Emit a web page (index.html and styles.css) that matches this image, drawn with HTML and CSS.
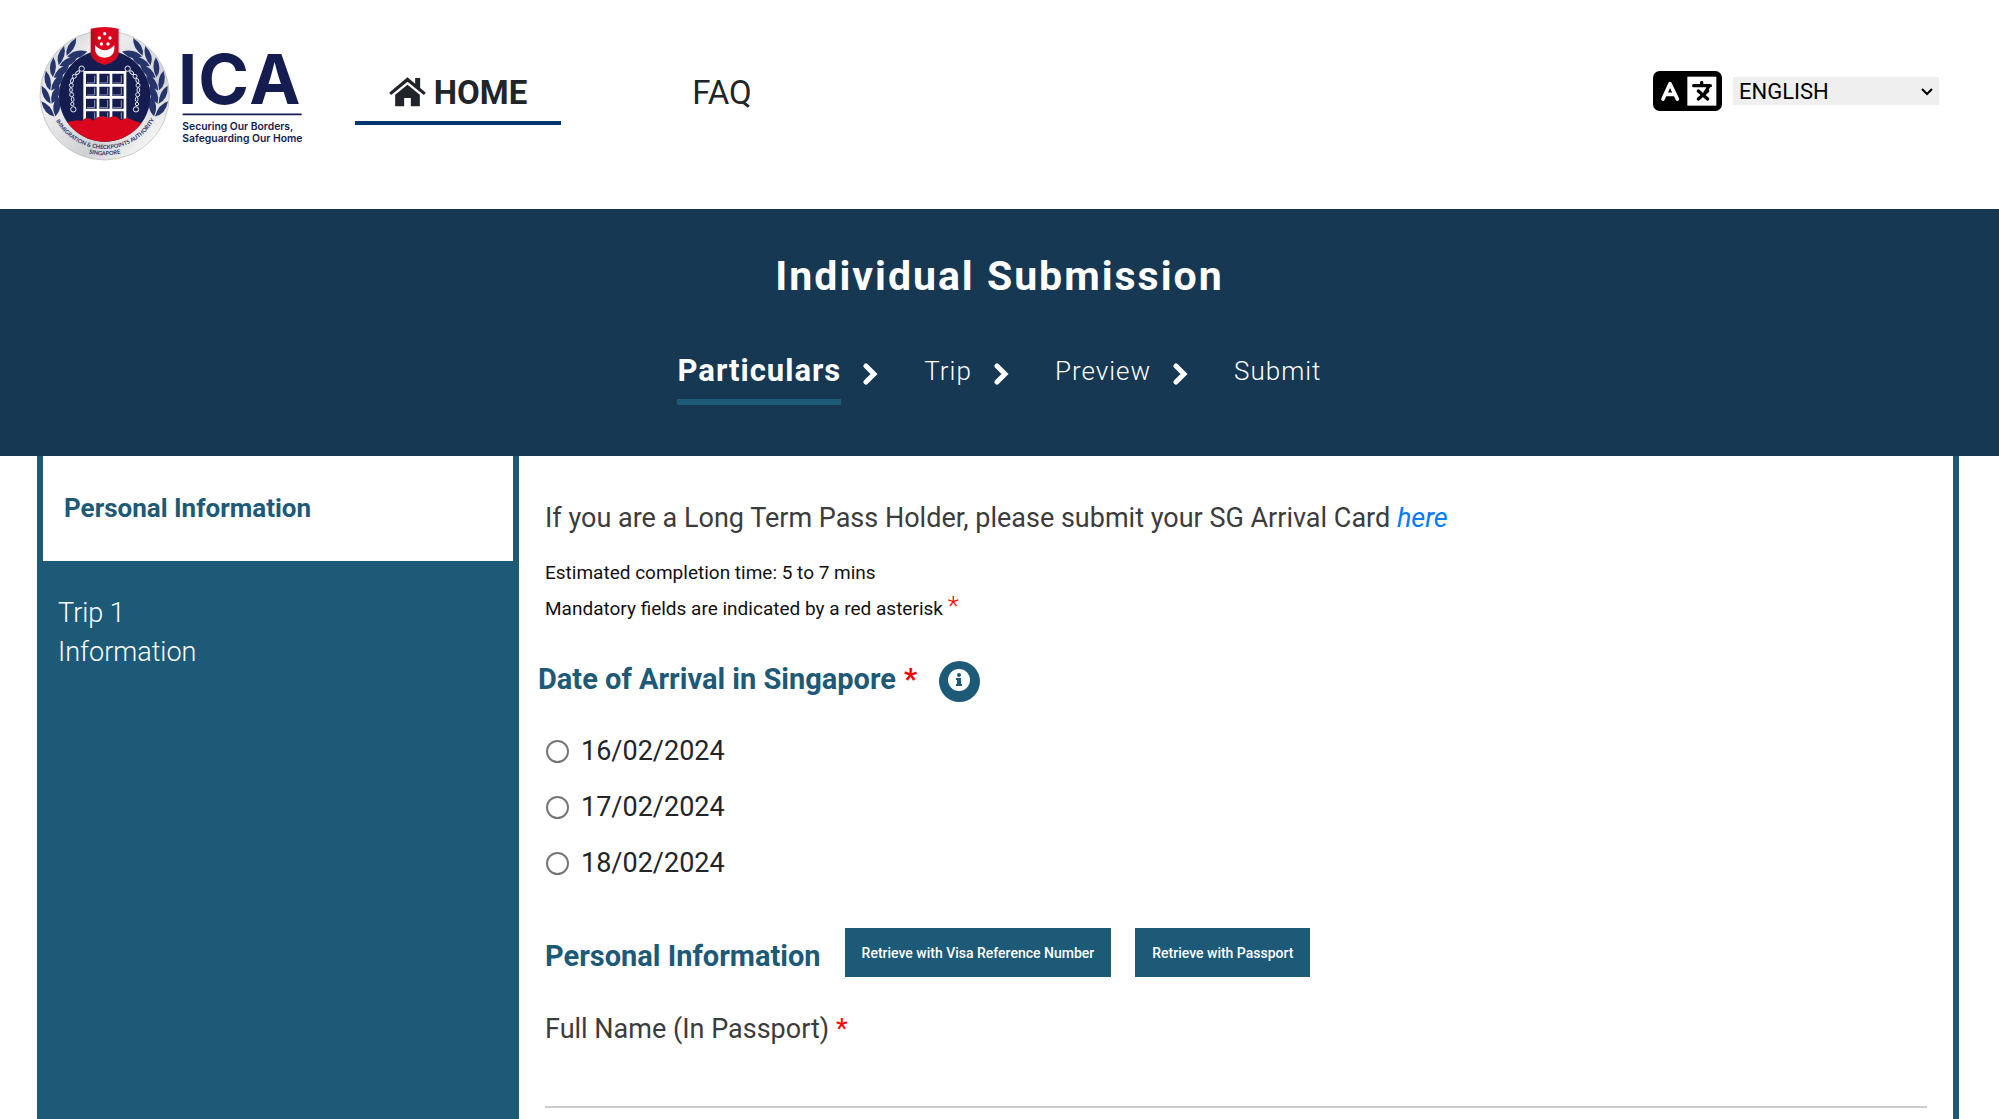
FILE: index.html
```html
<!DOCTYPE html>
<html lang="en">
  <head>
    <meta charset="utf-8">
    <title>SG Arrival Card - Individual Submission</title>
    <link rel="stylesheet" href="styles.css">
  </head>
  <body>
    <header class="header">
      <a href="#home" class="logo" aria-label="ICA">
        <svg width="265" height="140" viewBox="25 30 795 420">
          <defs>
            <linearGradient id="silver" x1="0" y1="0" x2="1" y2="1">
              <stop offset="0" stop-color="#c4c5c7"/>
              <stop offset=".3" stop-color="#f1f1f2"/>
              <stop offset=".65" stop-color="#d0d1d3"/>
              <stop offset=".85" stop-color="#f4f4f4"/>
              <stop offset="1" stop-color="#a4a5a8"/>
            </linearGradient>
            <linearGradient id="red" x1="0" y1="0" x2="1" y2="0">
              <stop offset="0" stop-color="#b8091d"/>
              <stop offset=".4" stop-color="#e3061f"/>
              <stop offset="1" stop-color="#cb0a20"/>
            </linearGradient>
            <clipPath id="disc"><circle cx="225" cy="243" r="137"/></clipPath>
            <g id="leaf">
              <path d="M63 266Q34 252 36 212Q62 228 63 266Z"/>
              <path d="M66 266Q58 232 88 208Q98 246 66 266Z"/>
            </g>
            <g id="laurel" fill="#26356b">
              <use href="#leaf" transform="rotate(-14 225 240)"/>
              <use href="#leaf"/>
              <use href="#leaf" transform="rotate(14 225 240)"/>
              <use href="#leaf" transform="rotate(28 225 240)"/>
              <use href="#leaf" transform="rotate(42 225 240)"/>
              <use href="#leaf" transform="rotate(55 225 240)"/>
            </g>
            <g id="chain" fill="none" stroke="#e8e9ef" stroke-width="3">
              <circle cx="156" cy="161" r="8"/>
              <ellipse cx="144" cy="173" rx="4" ry="7" transform="rotate(50 144 173)"/>
              <circle cx="134" cy="184" r="6"/>
              <ellipse cx="127" cy="197" rx="4" ry="7" transform="rotate(20 127 197)"/>
              <circle cx="125" cy="211" r="6"/>
              <ellipse cx="124" cy="225" rx="4" ry="7"/>
              <circle cx="126" cy="239" r="6"/>
              <ellipse cx="129" cy="253" rx="4" ry="7"/>
              <circle cx="128" cy="267" r="5"/>
              <circle cx="131" cy="283" r="8"/>
            </g>
            <path id="arc1" d="M72 306A170 170 0 0 0 380 302"/>
            <path id="arc2" d="M150 404A174 174 0 0 0 300 404"/>
          </defs>
          <!-- crest -->
          <circle cx="225" cy="241" r="194" fill="url(#silver)" stroke="#b4b5b8" stroke-width="2"/>
          <use href="#laurel"/>
          <use href="#laurel" transform="matrix(-1 0 0 1 450 0)"/>
          <circle cx="225" cy="243" r="137" fill="#151d50"/>
          <use href="#chain"/>
          <use href="#chain" transform="matrix(-1 0 0 1 450 0)"/>
          <!-- portcullis -->
          <path d="M165 318V172H286V318M162 211H286M162 247H286M162 285H286M205 175V318M244 175V318" fill="none" stroke="#fff" stroke-width="8"/>
          <path d="M195 182V204H172M234 182V204H211M275 182V204H250M195 218V240H172M234 218V240H211M275 218V240H250M195 255V278H172M234 255V278H211M275 255V278H250M195 292V312M234 292V312M275 292V312" fill="none" stroke="#8f96b8" stroke-width="3"/>
          <path d="M80 330L118 320L140 316L155 318L168 309L182 311L190 317L205 306L222 303L236 310L248 304L262 305L272 315L292 308L310 316L340 326V400H80Z" fill="#d9061e" clip-path="url(#disc)"/>
          <!-- shield -->
          <path d="M183 41Q225 31 267 41V118Q262 140 225 150Q188 140 183 118Z" fill="url(#red)"/>
          <path d="M196 91Q225 121 254 91Q257 127 225 128Q193 127 196 91Z" fill="#fff"/>
          <g fill="#fff">
            <circle cx="225" cy="56" r="5"/>
            <circle cx="209" cy="69" r="5"/>
            <circle cx="241" cy="69" r="5"/>
            <circle cx="215" cy="87" r="5"/>
            <circle cx="235" cy="87" r="5"/>
          </g>
          <g class="crest-text">
            <text><textPath href="#arc1" startOffset="50%">IMMIGRATION &amp; CHECKPOINTS AUTHORITY</textPath></text>
            <text><textPath href="#arc2" startOffset="50%">SINGAPORE</textPath></text>
          </g>
          <!-- wordmark -->
          <text class="wordmark" y="267" x="445 506 659">ICA</text>
          <path d="M459 298H816" stroke="#151d50" stroke-width="5"/>
          <text class="tagline" x="458" y="346">Securing Our Borders,</text>
          <text class="tagline" x="458" y="381">Safeguarding Our Home</text>
        </svg>
      </a>
      <nav class="nav">
        <a href="#home" class="active">
          <svg width="37" height="30" viewBox="148 51 110 90" fill="#212529">
            <path d="M148 98L203 52L226 71V54H241V84L258 98L252 105L203 65L154 105Z"/>
            <path d="M166 104L203 74L240 104V139H213V114H193V139H166Z"/>
          </svg>
          HOME
        </a>
        <a href="#faq">FAQ</a>
      </nav>
      <div class="language">
        <svg width="69" height="40" viewBox="0 0 207 120">
          <rect width="207" height="120" rx="20"/>
          <path d="M103 17H190V104H103Z" fill="#fff"/>
          <path d="M30 84L51 38L73 84M38 70H65" fill="none" stroke="#fff" stroke-width="11" stroke-linecap="round" stroke-linejoin="round"/>
          <path d="M122 44H172M146 34V43M167 46Q162 58 156 64M136 60L164 84M164 60L136 84" fill="none" stroke="#000" stroke-width="10" stroke-linecap="round"/>
        </svg>
        <select aria-label="Language">
          <option>ENGLISH</option>
        </select>
      </div>
    </header>

    <section class="banner">
      <h1>Individual Submission</h1>
      <ol class="steps">
        <li class="active"><span>Particulars</span></li>
        <li>
          <svg width="16" height="22" viewBox="0 0 16 22"><path d="M4 3L12 11L4 19" fill="none" stroke="#fff" stroke-width="5" stroke-linecap="round"/></svg>
          <span>Trip</span>
        </li>
        <li>
          <svg width="16" height="22" viewBox="0 0 16 22"><path d="M4 3L12 11L4 19" fill="none" stroke="#fff" stroke-width="5" stroke-linecap="round"/></svg>
          <span>Preview</span>
        </li>
        <li>
          <svg width="16" height="22" viewBox="0 0 16 22"><path d="M4 3L12 11L4 19" fill="none" stroke="#fff" stroke-width="5" stroke-linecap="round"/></svg>
          <span>Submit</span>
        </li>
      </ol>
    </section>

    <div class="content">
      <aside class="sidebar">
        <a href="#personal" class="active">Personal Information</a>
        <a href="#trip">Trip 1<br>Information</a>
      </aside>
      <main class="main">
        <p class="notice">If you are a Long Term Pass Holder, please submit your SG Arrival Card <a href="#ltp">here</a></p>
        <p class="hint">Estimated completion time: 5 to 7 mins</p>
        <p class="hint">Mandatory fields are indicated by a red asterisk <span class="required">*</span></p>
        <form>
          <fieldset>
            <legend>
              Date of Arrival in Singapore <span class="required">*</span>
              <button type="button" class="info" aria-label="Information">
                <svg width="41" height="41" viewBox="0 0 41 41">
                  <circle cx="20" cy="19" r="11" fill="#fff"/>
                  <path d="M18 17H22V23H23V25H17V23H18V19H17V17Z" fill="#1c5a78"/>
                  <circle cx="20" cy="14" r="2" fill="#1c5a78"/>
                </svg>
              </button>
            </legend>
            <label class="radio"><input type="radio" name="arrival"> 16/02/2024</label>
            <label class="radio"><input type="radio" name="arrival"> 17/02/2024</label>
            <label class="radio"><input type="radio" name="arrival"> 18/02/2024</label>
          </fieldset>
          <div class="retrieve">
            <h2>Personal Information</h2>
            <button type="button">Retrieve with Visa Reference Number</button>
            <button type="button">Retrieve with Passport</button>
          </div>
          <div class="field">
            <label for="fullname">Full Name (In Passport) <span class="required">*</span></label>
            <input type="text" id="fullname">
          </div>
        </form>
      </main>
    </div>
  </body>
</html>
```
FILE: styles.css
```css
* { box-sizing: border-box; }
body {
  display: flex;
  flex-direction: column;
  min-height: 100vh;
  margin: 0;
  font-family: Roboto, "Liberation Sans", sans-serif;
  font-size: 27px;
  color: #212529;
  background: #fff;
}
svg { display: block; flex: none; }
h1, h2, p { margin: 0; }
a { text-decoration: none; }
.required { color: #f00; }

/* header */
.header {
  display: flex;
  align-items: flex-start;
  height: 209px;
  padding: 25px 60px 0 38px;
}
.wordmark { font: 700 206px Inter, sans-serif; fill: #151d50; }
.tagline { font: 600 31px Inter, sans-serif; fill: #151d50; }
.crest-text {
  font: 700 17px Lato, sans-serif;
  fill: #26356b;
  text-anchor: middle;
}
.nav {
  display: flex;
  gap: 58px;
  padding: 36px 0 0 52px;
}
.nav a {
  display: flex;
  justify-content: center;
  gap: 8px;
  width: 206px;
  height: 64px;
  font-size: 33px;
  line-height: 64px;
  color: #212529;
}
.nav a svg { margin-top: 16px; }
.nav .active {
  font-weight: 700;
  border-bottom: 4px solid #00376f;
}
.language {
  display: flex;
  align-items: center;
  gap: 11px;
  margin: 46px 0 0 auto;
}
.language select {
  appearance: none;
  width: 206px;
  height: 28px;
  padding: 0 6px;
  border: 0;
  font: 22px Roboto, sans-serif;
  color: #000;
  background: #efefef url("data:image/svg+xml,%3Csvg xmlns='http://www.w3.org/2000/svg' width='14' height='9'%3E%3Cpath d='M2 2l5 5 5-5' fill='none' stroke='%23000' stroke-width='2'/%3E%3C/svg%3E") no-repeat right 5px center;
}

/* banner */
.banner {
  height: 247px;
  padding-top: 43px;
  color: #fff;
  background: #163853;
  text-align: center;
}
.banner h1 {
  font-size: 41px;
  font-weight: 700;
  line-height: 48px;
  letter-spacing: 2px;
}
.steps {
  display: flex;
  justify-content: center;
  margin: 43px 0 0;
  padding: 0;
  list-style: none;
  font-size: 26px;
  font-weight: 300;
  line-height: 56px;
  letter-spacing: 1px;
}
.steps li {
  display: flex;
  align-items: flex-start;
}
.steps svg { margin: 20px 46px 0 21px; }
.steps .active span {
  font-size: 31px;
  font-weight: 700;
  border-bottom: 6px solid #1c5a78;
}

/* content */
.content {
  display: flex;
  flex: 1;
  margin: 0 40px 0 37px;
  border-right: 6px solid #1c5a78;
}
.sidebar {
  width: 482px;
  padding: 0 6px;
  background: #1c5a78;
}
.sidebar a {
  display: block;
  padding: 33px 15px;
  font-weight: 300;
  line-height: 39px;
  color: #fff;
}
.sidebar .active {
  padding: 33px 21px;
  font-size: 26px;
  font-weight: 700;
  color: #1c5a78;
  background: #fff;
}
.main {
  flex: 1;
  padding: 43px 26px 10px;
}
.notice {
  margin-bottom: 18px;
  line-height: 38px;
  color: #3c3c3c;
}
.notice a { font-style: italic; color: #007bff; }
.hint {
  font-size: 19px;
  line-height: 36px;
  color: #111;
}
.hint .required {
  font-size: 26px;
  font-weight: 300;
  line-height: 1;
}
fieldset {
  margin: 0;
  padding: 0;
  border: 0;
}
legend {
  display: flex;
  align-items: flex-start;
  gap: 8px;
  margin-left: -7px;
  padding: 34px 0 21px;
  font-size: 29px;
  font-weight: 700;
  line-height: 36px;
  color: #1c5a78;
}
.info {
  margin-left: 14px;
  padding: 0;
  border: 0;
  border-radius: 50%;
  background: #1c5a78;
}
.radio {
  display: flex;
  align-items: center;
  gap: 12px;
  height: 56px;
}
.radio input {
  appearance: none;
  width: 23px;
  height: 23px;
  margin: 0 0 0 1px;
  border: 2px solid #767676;
  border-radius: 50%;
}
.radio input:checked {
  background: #1c5a78;
  box-shadow: inset 0 0 0 4px #fff;
}
.retrieve {
  display: flex;
  align-items: flex-end;
  gap: 24px;
  margin-top: 37px;
}
.retrieve h2 {
  font-size: 29px;
  font-weight: 700;
  line-height: 42px;
  color: #1c5a78;
}
.retrieve button {
  height: 49px;
  padding: 0 17px;
  border: 0;
  font: 500 14px Roboto, sans-serif;
  color: #fff;
  background: #1c5a78;
}
.field { margin-top: 33px; }
.field label {
  display: block;
  line-height: 38px;
  color: #3c3c3c;
}
.field input {
  width: 100%;
  height: 60px;
  border: 0;
  border-bottom: 2px solid #ccc;
  font: inherit;
}
```
